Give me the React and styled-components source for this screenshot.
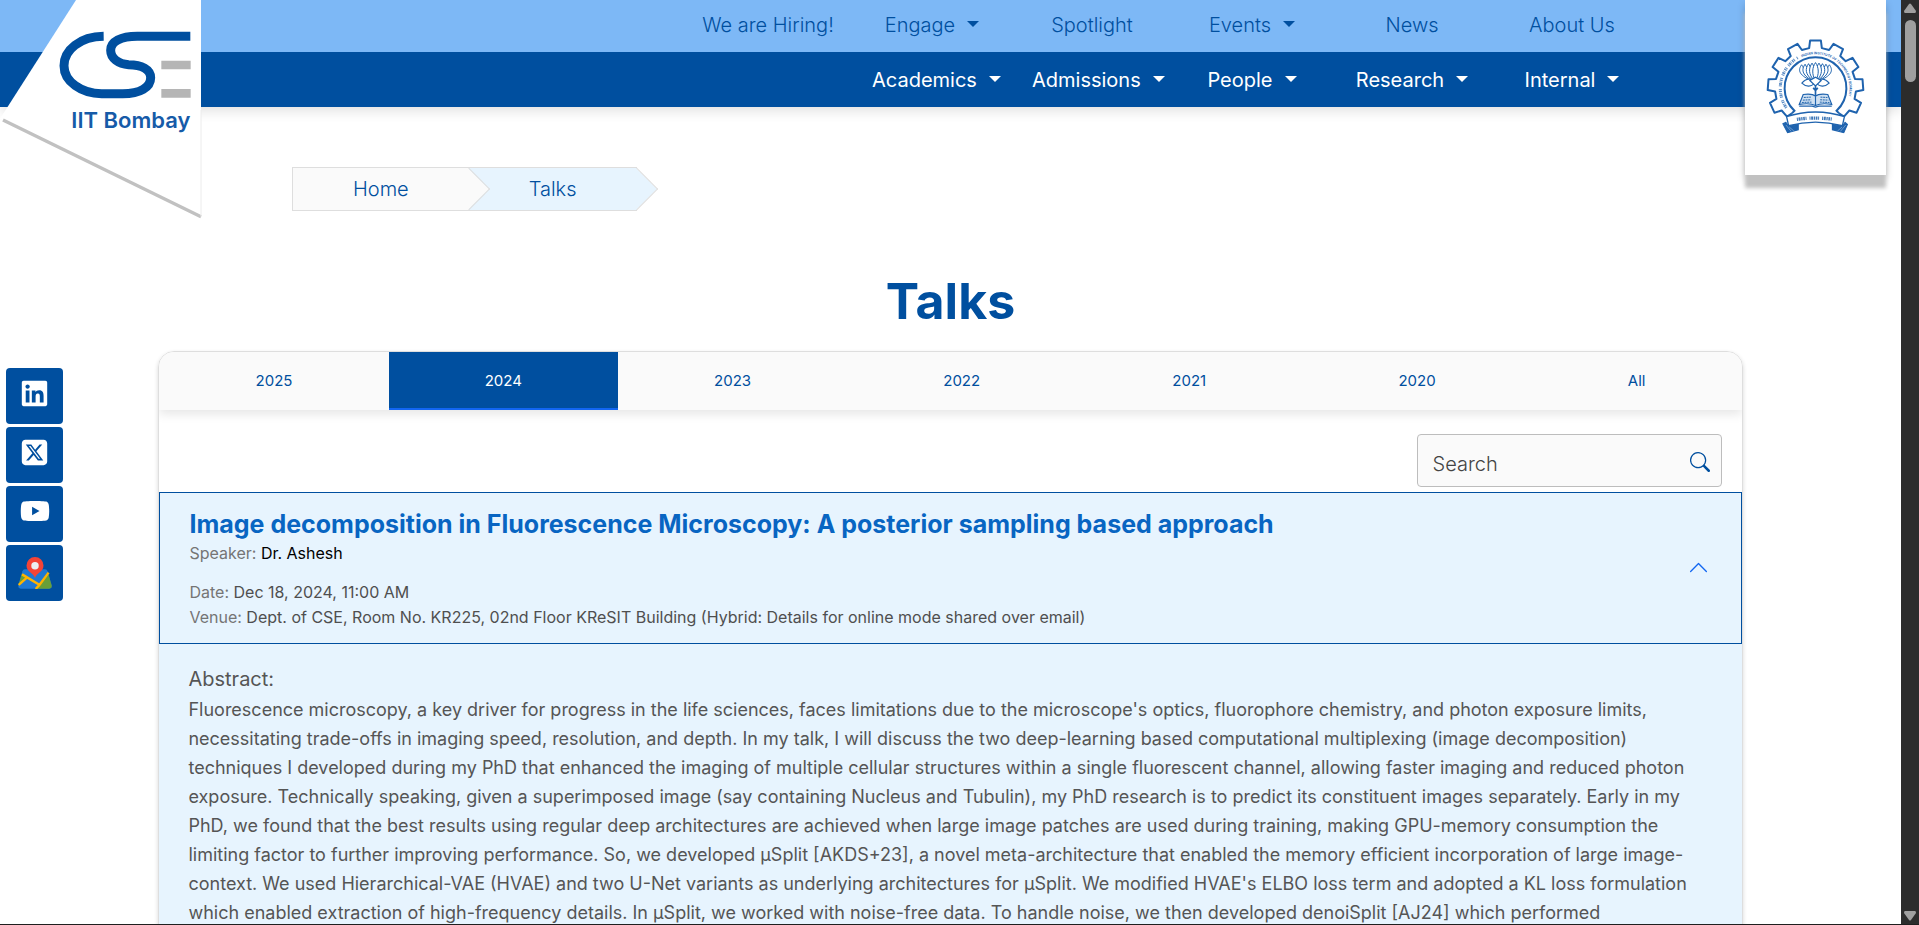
import React from "react";
import styled, { createGlobalStyle } from "styled-components";
import { FaLinkedin, FaSquareXTwitter, FaYoutube } from "react-icons/fa6";
import { BsSearch, BsChevronUp } from "react-icons/bs";

const blue = "#004f9f";

const GlobalStyle = createGlobalStyle`
  *, *::before, *::after { box-sizing: border-box; }
  body {
    margin: 0;
    font-family: Inter, "Liberation Sans", sans-serif;
    font-size: 16px;
    color: #555;
    background: #fff;
    overflow: hidden;
  }
  a { text-decoration: none; }
`;

const Window = styled.div`
  display: flex;
  height: 100vh;
  border-bottom: 1px solid #1f1f1f;
`;

const Page = styled.div`
  position: relative;
  flex: 1;
  min-width: 0;
  overflow: hidden;
`;

const ScrollTrack = styled.div`
  flex: none;
  display: flex;
  flex-direction: column;
  align-items: center;
  justify-content: space-between;
  width: 18px;
  padding: 3px 0;
  background: #2c2c2c;
`;

const ScrollGroup = styled.div`
  display: flex;
  flex-direction: column;
  align-items: center;
  gap: 7px;
`;

const Arrow = styled.svg`
  display: block;
  width: 12px;
  height: 10px;
  fill: #9f9f9f;
`;

const Thumb = styled.div`
  width: 11px;
  height: 62px;
  border-radius: 6px;
  background: #9f9f9f;
`;

const Header = styled.header`
  position: relative;
  box-shadow: 0 4px 12px rgba(0, 0, 0, 0.12);
`;

const NavRow = styled.nav`
  display: flex;
  justify-content: flex-end;
  align-items: center;
  height: ${(p) => (p.$main ? 55 : 52)}px;
  padding: 0 249px ${(p) => (p.$main ? 0 : 2)}px 0;
  background: ${(p) => (p.$main ? blue : "#7db8f6")};
  color: ${(p) => (p.$main ? "#fff" : blue)};
  font-weight: ${(p) => (p.$main ? 400 : 300)};
`;

const NavLink = styled.a`
  flex: none;
  width: ${(p) => (p.$wide ? 168 : 160)}px;
  padding: 0 ${(p) => (p.$wide ? 16 : 20)}px;
  font-size: 20px;
  line-height: 30px;
  text-align: center;
  white-space: nowrap;
  color: inherit;
`;

const Caret = styled.span`
  display: inline-block;
  margin-left: 12px;
  vertical-align: 5px;
  border: 6px solid transparent;
  border-top-color: currentColor;
  border-bottom: 0;
`;

const LogoLink = styled.a`
  position: absolute;
  top: 0;
  left: 0;
  z-index: 2;
  svg { display: block; width: 202px; height: 220px; }
`;

const EmblemLink = styled.a`
  position: absolute;
  top: 0;
  right: 15px;
  z-index: 2;
  display: flex;
  justify-content: center;
  width: 141px;
  height: 175px;
  padding-top: 37px;
  background: #fff;
  box-shadow: 0 13px 4px 0 #c1c1c1, 0 4px 8px rgba(0, 0, 0, 0.2);
  svg { display: block; width: 101px; height: 99px; }
`;

const Breadcrumb = styled.nav`
  display: flex;
  margin: 60px 0 0 292px;
`;

const Crumb = styled.a`
  position: relative;
  z-index: ${(p) => (p.$current ? 0 : 1)};
  height: 44px;
  padding: 0 60px;
  border: 1px solid #dedede;
  border-width: 1px 0 1px ${(p) => (p.$current ? 0 : 1)}px;
  background: ${(p) => (p.$current ? "#e7f4fe" : "#fafafa")};
  color: ${blue};
  font-size: 20px;
  font-weight: 300;
  line-height: 42px;

  &::after {
    content: "";
    position: absolute;
    top: 6px;
    right: -15px;
    width: 30px;
    height: 30px;
    border: 1px solid #dedede;
    border-width: 1px 1px 0 0;
    background: linear-gradient(45deg, transparent 50%, ${(p) => (p.$current ? "#e7f4fe" : "#fafafa")} 50%);
    transform: rotate(45deg);
  }
`;

const Heading = styled.h1`
  margin: 60px 0 20px;
  color: ${blue};
  font-size: 50px;
  font-weight: 700;
  line-height: 60px;
  text-align: center;
`;

const Card = styled.section`
  width: 83.33%;
  margin: 0 auto;
  border: 1px solid #dedede;
  border-radius: 16px 16px 0 0;
  overflow: hidden;
  box-shadow: 0 2px 4px rgba(0, 0, 0, 0.16);
`;

const Tabs = styled.div`
  display: flex;
  height: 58px;
  background: #fafafa;
  box-shadow: 0 4px 10px rgba(0, 0, 0, 0.1);
`;

const Tab = styled.button`
  flex: 1 1 auto;
  padding: 2px 28px 0;
  border: 0;
  border-bottom: 2px solid ${(p) => (p.$active ? "#1266f1" : "transparent")};
  background: ${(p) => (p.$active ? blue : "transparent")};
  color: ${(p) => (p.$active ? "#fff" : blue)};
  font-family: inherit;
  font-size: 15px;
  font-weight: 400;
  line-height: 20px;
`;

const SearchRow = styled.form`
  display: flex;
  justify-content: flex-end;
  padding: 24px 20px 5px;
`;

const SearchBox = styled.div`
  display: flex;
  align-items: center;
  width: 305px;
  height: 53px;
  padding: 0 11px 0 15px;
  border: 1px solid #bdbdbd;
  border-radius: 4px;
  background: #fafafa;
`;

const SearchInput = styled.input`
  flex: 1;
  min-width: 0;
  padding: 6px 0 0;
  border: 0;
  outline: 0;
  background: transparent;
  font-family: inherit;
  font-size: 20px;
  font-weight: 300;
  line-height: 28px;
  &::placeholder { color: #444; opacity: 1; }
`;

const SearchButton = styled.button`
  padding: 2px 0 0;
  border: 0;
  background: transparent;
  color: ${blue};
  svg { display: block; width: 20px; height: 20px; }
`;

const TalkHeader = styled.button`
  display: flex;
  align-items: center;
  justify-content: space-between;
  width: 100%;
  padding: 15px 32px 13px 29px;
  border: 1px solid ${blue};
  background: #e7f4fe;
  font-family: inherit;
  text-align: left;
  color: #1266f1;
`;

const Chevron = styled(BsChevronUp)`
  display: block;
  width: 21px;
  height: 21px;
  margin-bottom: 4px;
`;

const TalkTitle = styled.h2`
  margin: 0 0 1px;
  color: #0865c2;
  font-size: 25px;
  font-weight: 700;
  line-height: 32px;
`;

const Meta = styled.p`
  margin: 0 0 ${(p) => (p.$spaced ? 14 : 0)}px;
  color: ${(p) => (p.$spaced ? "#000" : "#4f4f4f")};
  font-size: 16px;
  font-weight: 400;
  line-height: 25px;
`;

const Label = styled.span`
  color: #757575;
`;

const Abstract = styled.div`
  padding: 19px 48px 40px 29px;
  background: #e7f4fe;
  color: #555;
`;

const AbstractTitle = styled.h3`
  margin: 0;
  font-size: 20px;
  font-weight: 400;
  line-height: 32px;
`;

const AbstractText = styled.p`
  margin: 0;
  font-size: 18px;
  font-weight: 400;
  line-height: 29px;
`;

const Social = styled.aside`
  position: absolute;
  top: 368px;
  left: 6px;
  display: flex;
  flex-direction: column;
  gap: 3px;
`;

const SocialLink = styled.a`
  display: flex;
  justify-content: center;
  width: 57px;
  height: 56px;
  padding-top: ${(p) => p.$top || 11}px;
  border-radius: 4px;
  background: ${blue};
  color: #fff;
`;

const topLinks = [
  { label: "We are Hiring!", wide: true },
  { label: "Engage", menu: true },
  { label: "Spotlight" },
  { label: "Events", menu: true },
  { label: "News" },
  { label: "About Us" },
];
const mainLinks = ["Academics", "Admissions", "People", "Research", "Internal"];
const years = ["2025", "2024", "2023", "2022", "2021", "2020", "All"];

function CseLogo() {
  return (
    <svg viewBox="0 0 606 660" role="img" aria-label="CSE IIT Bombay">
      <path d="M228 0H603V648L0 356Z" fill="#fff" />
      <path d="M9 360L603 650" stroke="#c1c1c1" strokeWidth="10" fill="none" />
      <path d="M603 330V650" stroke="#ececec" strokeWidth="3" />
      <path
        d="M311 109C240 110 192 150 192 197C192 245 245 281 305 281H368C420 281 452 262 452 233C452 208 425 194 386 194C355 192 332 175 332 151C332 125 362 109 412 109H571"
        fill="none"
        stroke={blue}
        strokeWidth="27"
      />
      <path d="M484 182h88v26h-88zM484 267h88v26h-88z" fill="#b5b5b5" />
      <text x="214" y="383" fontSize="66" fontWeight="600" fill="#165ba8">IIT Bombay</text>
    </svg>
  );
}

const polar = (r, deg) => {
  const a = (deg * Math.PI) / 180;
  return `${(347 + r * Math.sin(a)).toFixed(1)} ${(263 - r * Math.cos(a)).toFixed(1)}`;
};

function gearPath() {
  const pts = [polar(104, -137), polar(121, -135)];
  for (let i = -4; i <= 4; i += 1) {
    const c = i * 28.6;
    pts.push(polar(122, c - 9), polar(144, c - 6.5), polar(144, c + 6.5), polar(122, c + 9));
  }
  pts.push(polar(121, 135), polar(104, 137));
  return `M${pts.join("L")}`;
}

function Emblem() {
  const petals = [-44, 44, -33, 33, -22, 22, -11, 11, 0];
  return (
    <svg viewBox="195 110 304 296" role="img" aria-label="IIT Bombay emblem" fill="none" stroke="#1f63ae" strokeWidth="3.5">
      <path d={gearPath()} strokeWidth="6" strokeLinejoin="round" />
      <path d={`M${polar(104, -137)}L${polar(93, -137)}A93 93 0 1 1 ${polar(93, 137)}L${polar(104, 137)}`} strokeWidth="6" />
      <path id="emblem-arc" d={`M${polar(102, -24)}A102 102 0 0 1 ${polar(102, 134)}`} stroke="none" />
      <text fontSize="10" fontWeight="700" fill="#2f6db5" stroke="none">
        <textPath href="#emblem-arc">INDIAN INSTITUTE OF TECHNOLOGY BOMBAY</textPath>
      </text>
      <path
        d={`M${polar(106, -124)}A106 106 0 0 1 ${polar(106, -30)}`}
        stroke="#5b8cc4"
        strokeWidth="9"
        strokeDasharray="3 2 5 2 2 3 4 2 3 8"
      />
      {petals.map((a) => {
        const x = 347 + a * 0.95;
        const top = 186 + Math.abs(a) * 0.15;
        const base = 347 + a * 0.3;
        return (
          <path
            key={a}
            d={`M${base} 240C${x - 12} 222 ${x - 10} ${top + 14} ${x} ${top}C${x + 10} ${top + 14} ${x + 12} 222 ${base} 240Z`}
            fill="#fff"
            strokeWidth="3"
          />
        );
      })}
      <path d="M306 248C318 232 338 232 345 246C336 260 318 260 306 248ZM388 248C376 232 356 232 349 246C358 260 376 260 388 248Z" fill="#fff" />
      <path d="M330 240L347 230L364 240L347 256Z" fill="#fff" />
      <path d="M347 256V290M340 262L347 270L354 262" strokeWidth="5" />
      <path d="M310 282C325 280 340 281 347 287C354 281 369 280 384 282L396 312C378 309 360 309 347 315C334 309 316 309 298 312Z" fill="#cfe0f1" />
      <path d="M298 317H337L347 320L357 317H396" />
      <path d="M312 291l21 -1M309 299l25 -1M306 306l29 -1M362 290l21 1M361 298l25 1M360 305l29 1" strokeWidth="3" strokeDasharray="6 2" />
      <path d="M347 287V315" />
      <path d="M260 349C315 330 379 330 434 349L428 376C376 362 318 362 266 376Z" fill="#fff" strokeWidth="4" />
      <path d="M258 366L249 370L263 397L295 388V372L266 378ZM436 366L443 372L432 397L398 388V372L428 378Z" fill="#1f63ae" />
      <path d="M258 374l16 19M268 380l14 12M438 374l-16 19M427 380l-14 12" stroke="#8fb4dc" strokeWidth="2" />
      <path d="M291 357Q347 349 402 357" stroke="#3f78b8" strokeWidth="10" strokeDasharray="3 2 6 2 4 2 5 2 3 9" />
    </svg>
  );
}

function MapIcon() {
  return (
    <svg width="34" height="32" viewBox="0 0 100 94" aria-hidden="true">
      <path d="M20 36H80Q85 36 87 42L99 84Q100 93 92 93H8Q0 93 1 84L13 42Q15 36 20 36Z" fill="#1e78d4" />
      <path d="M13 44L1 84L26 62L12 50Z" fill="#689f38" />
      <path d="M90 52L99 84Q100 93 92 93H54L64 80Z" fill="#689f38" />
      <path d="M12 51L64 82M2 82L27 60M90 46L63 82L52 94" stroke="#ffb300" strokeWidth="7" fill="none" />
      <path d="M50 62C46 46 25 44 25 25A25 25 0 0 1 75 25C75 44 54 46 50 62Z" fill="#f44336" />
      <circle cx="50" cy="26" r="11" fill="#eceff1" />
    </svg>
  );
}

export default function App() {
  return (
    <>
      <GlobalStyle />
      <Window>
        <Page>
          <Header>
            <NavRow aria-label="Secondary">
              {topLinks.map((l) => (
                <NavLink href="#" key={l.label} $wide={l.wide}>
                  {l.label}
                  {l.menu && <Caret />}
                </NavLink>
              ))}
            </NavRow>
            <NavRow $main aria-label="Main">
              {mainLinks.map((l) => (
                <NavLink href="#" key={l}>
                  {l}
                  <Caret />
                </NavLink>
              ))}
            </NavRow>
            <LogoLink href="#"><CseLogo /></LogoLink>
            <EmblemLink href="#"><Emblem /></EmblemLink>
          </Header>

          <Breadcrumb aria-label="Breadcrumb">
            <Crumb href="#">Home</Crumb>
            <Crumb href="#" $current>Talks</Crumb>
          </Breadcrumb>

          <main>
            <Heading>Talks</Heading>
            <Card>
              <Tabs>
                {years.map((y) => (
                  <Tab key={y} type="button" $active={y === "2024"}>{y}</Tab>
                ))}
              </Tabs>
              <SearchRow role="search">
                <SearchBox>
                  <SearchInput type="text" placeholder="Search" aria-label="Search" />
                  <SearchButton type="button" aria-label="Submit search"><BsSearch /></SearchButton>
                </SearchBox>
              </SearchRow>
              <TalkHeader type="button" aria-expanded="true">
                <div>
                  <TalkTitle>Image decomposition in Fluorescence Microscopy: A posterior sampling based approach</TalkTitle>
                  <Meta $spaced><Label>Speaker:</Label> Dr. Ashesh</Meta>
                  <Meta><Label>Date:</Label> Dec 18, 2024, 11:00 AM</Meta>
                  <Meta><Label>Venue:</Label> Dept. of CSE, Room No. KR225, 02nd Floor KReSIT Building (Hybrid: Details for online mode shared over email)</Meta>
                </div>
                <Chevron />
              </TalkHeader>
              <Abstract>
                <AbstractTitle>Abstract:</AbstractTitle>
                <AbstractText>
                  Fluorescence microscopy, a key driver for progress in the life sciences, faces limitations due to the
                  microscope's optics, fluorophore chemistry, and photon exposure limits, necessitating trade-offs in
                  imaging speed, resolution, and depth. In my talk, I will discuss the two deep-learning based
                  computational multiplexing (image decomposition) techniques I developed during my PhD that enhanced the
                  imaging of multiple cellular structures within a single fluorescent channel, allowing faster imaging and
                  reduced photon exposure. Technically speaking, given a superimposed image (say containing Nucleus and
                  Tubulin), my PhD research is to predict its constituent images separately. Early in my PhD, we found that
                  the best results using regular deep architectures are achieved when large image patches are used during
                  training, making GPU-memory consumption the limiting factor to further improving performance. So, we
                  developed µSplit [AKDS+23], a novel meta-architecture that enabled the memory efficient incorporation of
                  large image-context. We used Hierarchical-VAE (HVAE) and two U-Net variants as underlying architectures
                  for µSplit. We modified HVAE's ELBO loss term and adopted a KL loss formulation which enabled extraction
                  of high-frequency details. In µSplit, we worked with noise-free data. To handle noise, we then developed
                  denoiSplit [AJ24] which performed
                </AbstractText>
              </Abstract>
            </Card>
          </main>

          <Social aria-label="Social links">
            <SocialLink href="#" aria-label="LinkedIn"><FaLinkedin size={29} /></SocialLink>
            <SocialLink href="#" aria-label="X"><FaSquareXTwitter size={29} /></SocialLink>
            <SocialLink href="#" aria-label="YouTube" $top={10}><FaYoutube size={30} /></SocialLink>
            <SocialLink href="#" aria-label="Map" $top={12}><MapIcon /></SocialLink>
          </Social>
        </Page>
        <ScrollTrack aria-hidden="true">
          <ScrollGroup>
            <Arrow viewBox="0 0 12 10"><path d="M5 1Q6 0 7 1L12 8Q12 10 11 10H1Q0 10 0 8Z" /></Arrow>
            <Thumb />
          </ScrollGroup>
          <Arrow viewBox="0 0 12 10"><path d="M5 9Q6 10 7 9L12 2Q12 0 11 0H1Q0 0 0 2Z" /></Arrow>
        </ScrollTrack>
      </Window>
    </>
  );
}
